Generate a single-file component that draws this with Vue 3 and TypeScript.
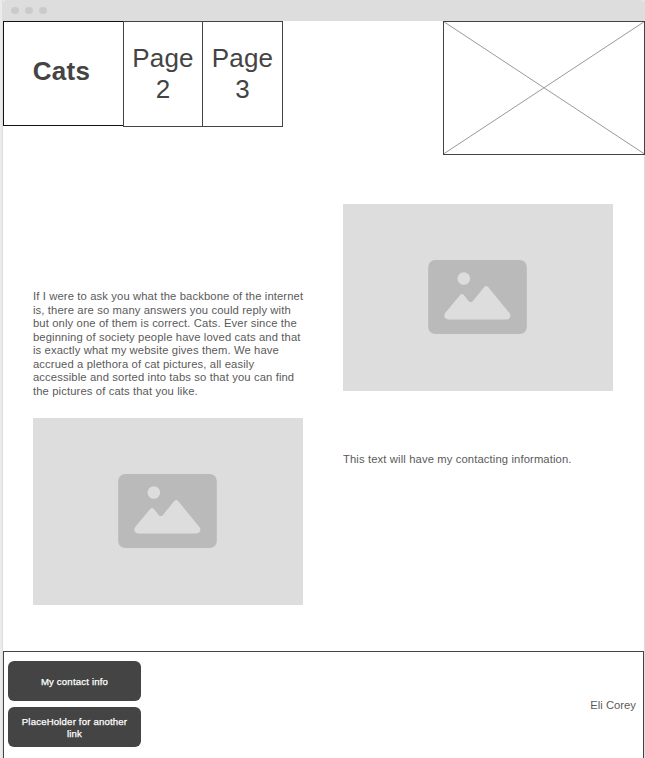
<script setup lang="ts">
import { defineComponent, h } from 'vue'

const intro: string[] = [
  'If I were to ask you what the backbone of the internet',
  'is, there are so many answers you could reply with',
  'but only one of them is correct. Cats. Ever since the',
  'beginning of society people have loved cats and that',
  'is exactly what my website gives them. We have',
  'accrued a plethora of cat pictures, all easily',
  'accessible and sorted into tabs so that you can find',
  'the pictures of cats that you like.',
]
const links: string[] = ['My contact info', 'PlaceHolder for another link']

const PictureIcon = defineComponent({
  render: () =>
    h('svg', { width: 99, height: 74, viewBox: '0 0 99 74' }, [
      h('rect', { x: 0.2, width: 98.6, height: 74, rx: 7, fill: '#bababa' }),
      h('circle', { cx: 35.8, cy: 18.5, r: 6.3, fill: '#ddd' }),
      h('path', {
        fill: '#ddd',
        d: 'M17.2 53 L32.1 35 Q34 33 35.9 35 L40.8 41.2 Q42.7 43 44.7 41.2 L56.3 27 Q58.2 25 60.1 27 L81.6 53.2 Q82.8 55 82.2 57 Q81.2 59.4 78.8 59.4 H20 Q17.4 59.4 16.5 57 Q15.9 54.8 17.2 53 Z',
      }),
    ]),
})
</script>

<template>
  <div class="desk">
    <div class="window">
      <div class="titlebar"><i></i><i></i><i></i></div>
      <header class="top">
        <nav class="tabs">
          <a class="tab current">Cats</a>
          <a class="tab">Page<br />2</a>
          <a class="tab last">Page<br />3</a>
        </nav>
        <svg class="logo" width="202" height="134" viewBox="0 0 202 134">
          <path d="M.5 .5 L201.5 133 M201.5 .5 L.5 133" stroke="#999" fill="none" />
          <rect x=".5" y=".5" width="201" height="133" stroke="#444" fill="none" />
        </svg>
      </header>
      <main class="content">
        <section class="left">
          <p class="copy"><span v-for="line in intro" :key="line">{{ line }}</span></p>
          <div class="picture"><PictureIcon /></div>
        </section>
        <section class="right">
          <div class="picture"><PictureIcon /></div>
          <p class="copy"><span>This text will have my contacting information.</span></p>
        </section>
      </main>
      <footer class="footer">
        <div class="links">
          <button v-for="link in links" :key="link" type="button">{{ link }}</button>
        </div>
        <span class="author">Eli Corey</span>
      </footer>
    </div>
  </div>
</template>

<style>
body { margin: 0; overflow: hidden; }
</style>

<style scoped>
.desk {
  box-sizing: border-box;
  width: 645px;
  height: 758px;
  padding: 0 1px 0 3px;
  overflow: hidden;
  background: linear-gradient(to right, #ebebeb 2px, #dedede 2px);
  font-family: "Liberation Sans", Arial, sans-serif;
}
.window {
  display: flex;
  flex-direction: column;
  width: 641px;
  height: 758px;
  background: linear-gradient(#ebebeb 10px, #fff 10px);
}
.titlebar {
  display: flex;
  flex: none;
  gap: 6px;
  height: 13px;
  padding: 7px 0 1px 7.5px;
  border-radius: 4px 4px 0 0;
  background: #ddd;
}
.titlebar i { width: 8px; height: 7px; border-radius: 50%; background: #cacaca; }
.top { display: flex; flex: none; justify-content: space-between; height: 134px; }
.logo { flex: none; margin-right: -1px; background: #fff; }
.tabs { display: flex; align-items: flex-start; }
.tab {
  box-sizing: border-box;
  display: flex;
  align-items: center;
  justify-content: center;
  width: 79px;
  height: 106px;
  border: 1px solid #444;
  border-right: 0;
  color: #444;
  font-size: 26px;
  letter-spacing: 0.15px;
  line-height: 31px;
  text-align: center;
}
.tab.last { width: 81px; border-right: 1px solid #444; }
.tab.current {
  width: 120px;
  height: 105px;
  padding: 0 4px 4px 0;
  border-color: #111;
  font-weight: bold;
  letter-spacing: 0.3px;
}
.content { display: flex; flex: none; gap: 40px; height: 496px; padding-left: 30px; }
.left, .right { width: 270px; }
.left { padding-top: 135px; }
.right { padding-top: 49px; }
.copy {
  display: flex;
  flex-direction: column;
  margin: 0;
  color: #5a5a5a;
  font-size: 11.25px;
  letter-spacing: 0.117px;
  line-height: 13.5px;
  white-space: nowrap;
}
.left .picture { margin-top: 20px; }
.right .copy { margin-top: 62px; }
.picture {
  display: flex;
  justify-content: center;
  box-sizing: border-box;
  height: 187px;
  padding: 56px 1px 0 0;
  background: #ddd;
}
.footer {
  box-sizing: border-box;
  display: flex;
  flex: none;
  align-items: center;
  justify-content: space-between;
  height: 110px;
  padding: 0 7px 0 4px;
  border: 1px solid #444;
  border-bottom: 0;
}
.links { display: flex; flex-direction: column; gap: 6px; width: 133px; margin-bottom: 6px; }
.links button {
  height: 40px;
  padding: 2px 10px 0;
  border: 0;
  border-radius: 6px;
  background: #444;
  color: #fff;
  font: 9.6px/12px "Liberation Sans", Arial, sans-serif;
  letter-spacing: 0.18px;
  -webkit-text-stroke: 0.25px #fff;
}
.author { margin-bottom: 3px; color: #5a5a5a; font-size: 11.25px; line-height: 14px; }
</style>
